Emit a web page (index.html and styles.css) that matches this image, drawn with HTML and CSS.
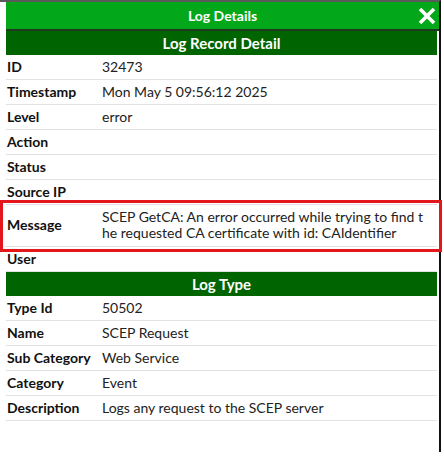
FILE: index.html
```html
<!DOCTYPE html>
<html>
<head>
<meta charset="utf-8">
<link rel="stylesheet" href="styles.css">
</head>
<body>
<div class="dialog">
  <div class="titlebar">
    <span class="title">Log Details</span>
    <svg class="close" width="18" height="18" viewBox="0 0 18 18"><path d="M2 2 L16 16 M16 2 L2 16" stroke="#fff" stroke-width="3.6" stroke-linecap="butt"/></svg>
  </div>
  <div class="content">
    <div class="section">Log Record Detail</div>
    <div class="row"><div class="label">ID</div><div class="value">32473</div></div>
    <div class="row"><div class="label">Timestamp</div><div class="value">Mon May 5 09:56:12 2025</div></div>
    <div class="row"><div class="label">Level</div><div class="value">error</div></div>
    <div class="row"><div class="label">Action</div><div class="value"></div></div>
    <div class="row"><div class="label">Status</div><div class="value"></div></div>
    <div class="row"><div class="label">Source IP</div><div class="value"></div></div>
    <div class="row row-highlight"><div class="label">Message</div><div class="value break">SCEP GetCA: An error occurred while trying to find the requested CA certificate with id: CAIdentifier</div></div>
    <div class="row"><div class="label">User</div><div class="value"></div></div>
    <div class="section">Log Type</div>
    <div class="row"><div class="label">Type Id</div><div class="value">50502</div></div>
    <div class="row"><div class="label">Name</div><div class="value">SCEP Request</div></div>
    <div class="row"><div class="label">Sub Category</div><div class="value">Web Service</div></div>
    <div class="row"><div class="label">Category</div><div class="value">Event</div></div>
    <div class="row"><div class="label">Description</div><div class="value">Logs any request to the SCEP server</div></div>
  </div>
</div>
</body>
</html>
```

FILE: styles.css
```css
html, body {
  margin: 0;
  padding: 0;
  background: #fff;
}
body {
  font-family: Lato, "Liberation Sans", sans-serif;
  color: #111;
}
.dialog {
  width: 441px;
  height: 452px;
  border-top: 2px solid #5a5a5a;
  border-right: 2px solid #111;
  box-sizing: border-box;
}
.titlebar {
  margin-left: 6px;
  height: 27px;
  background: #03a81a;
  border-bottom: 2px solid #1f3a1f;
  display: flex;
  align-items: center;
  justify-content: center;
  position: relative;
}
.title {
  color: #fff;
  font-weight: bold;
  font-size: 14px;
}
.close {
  position: absolute;
  right: 3px;
  top: 5px;
}
.content {
  margin-left: 6px;
  margin-right: 2px;
}
.section {
  background: #006400;
  color: #fff;
  font-weight: bold;
  font-size: 15px;
  height: 24px;
  display: flex;
  align-items: center;
  justify-content: center;
}
.row {
  display: grid;
  grid-template-columns: 96px 1fr;
  border-bottom: 1px solid #e2e2e2;
  padding: 4px 0 4px;
  line-height: 16px;
  font-size: 14px;
  align-items: center;
  min-height: 16px;
}
.label {
  font-weight: bold;
  padding-left: 1px;
  color: #111;
}
.value {
  color: #222;
}
.break {
  word-break: break-all;
  padding-right: 9px;
}
.row-highlight {
  outline: 3px solid #e3161b;
  outline-offset: 2px;
  margin-left: -1px;
  padding-left: 1px;
  padding-bottom: 5px;
}
```
